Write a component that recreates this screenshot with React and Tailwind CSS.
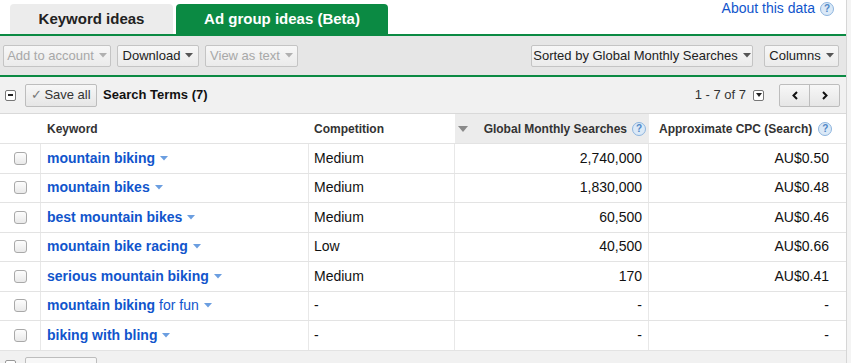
import React from "react";

const Caret = ({ color = "#555" }) => (
  <svg width="8" height="5" viewBox="0 0 8 5" className="inline-block ml-[5px] shrink-0">
    <path d="M0 0 L8 0 L4 4.5 Z" fill={color} />
  </svg>
);

const Help = () => (
  <span className="inline-flex items-center justify-center w-[14px] h-[14px] rounded-full border border-[#8db4de] bg-[#dbe9f7] text-[10px] font-bold text-[#4f86c6] leading-none">?</span>
);

const Btn = ({ children, disabled, className = "" }) => (
  <div
    className={
      "h-[22px] flex items-center justify-center whitespace-nowrap border border-[#c4c4c4] rounded-[2px] bg-gradient-to-b from-[#f7f7f7] to-[#ebebeb] text-[13px] " +
      (disabled ? "text-[#a8a8a8] " : "text-[#222] ") +
      className
    }
  >
    {children}
  </div>
);

const Checkbox = () => (
  <div className="w-[13px] h-[13px] rounded-[3px] border border-[#a9a9a9] bg-gradient-to-b from-[#fdfdfd] to-[#e9e9e9]" />
);

const rows = [
  { k: "mountain biking", c: "Medium", g: "2,740,000", p: "AU$0.50" },
  { k: "mountain bikes", c: "Medium", g: "1,830,000", p: "AU$0.48" },
  { k: "best mountain bikes", c: "Medium", g: "60,500", p: "AU$0.46" },
  { k: "mountain bike racing", c: "Low", g: "40,500", p: "AU$0.66" },
  { k: "serious mountain biking", c: "Medium", g: "170", p: "AU$0.41" },
  { k: "mountain biking", extra: "for fun", c: "-", g: "-", p: "-" },
  { k: "biking with bling", c: "-", g: "-", p: "-" },
];

export default function App() {
  return (
    <div
      className="w-[851px] h-[363px] overflow-hidden bg-white flex"
      style={{ fontFamily: '"Liberation Sans", Arial, sans-serif' }}
    >
      <div className="w-[846px] flex flex-col shrink-0">
        {/* Tabs */}
        <div className="h-[36px] flex items-end relative border-b-2 border-[#0b8a43]">
          <div className="ml-[10px] w-[163px] h-[30px] rounded-t-[4px] bg-[#ececec] flex items-center justify-center text-[15px] font-bold text-[#222]">
            Keyword ideas
          </div>
          <div className="ml-[3px] w-[212px] h-[30px] rounded-t-[4px] bg-[#0b8a43] flex items-center justify-center text-[15px] font-bold text-white">
            Ad group ideas (Beta)
          </div>
          <div className="absolute right-[12px] top-[-2px] flex items-center gap-[5px] text-[14px] text-[#1155cc]">
            About this data <Help />
          </div>
        </div>
        {/* Toolbar */}
        <div className="h-[41px] bg-[#e6e6e6] border-b-2 border-[#0b8a43] flex items-center px-[3px]">
          <Btn disabled className="w-[108px]">Add to account<Caret color="#b0b0b0" /></Btn>
          <Btn className="ml-[6px] w-[82px]">Download<Caret /></Btn>
          <Btn disabled className="ml-[6px] w-[93px]">View as text<Caret color="#b0b0b0" /></Btn>
          <div className="flex-1" />
          <Btn className="w-[222px]">Sorted by Global Monthly Searches<Caret /></Btn>
          <Btn className="ml-[11px] w-[75px] mr-[4px]">Columns<Caret /></Btn>
        </div>
        {/* Sub header */}
        <div className="h-[37px] bg-[#f1f1f1] border-b border-[#d9d9d9] flex items-center">
          <div className="ml-[5px] w-[11px] h-[11px] border border-[#777] rounded-[2px] bg-white flex items-center justify-center">
            <div className="w-[5px] h-[1.5px] bg-[#222]" />
          </div>
          <div className="ml-[9px] h-[23px] w-[72px] border border-[#bdbdbd] rounded-[2px] bg-gradient-to-b from-[#f7f7f7] to-[#e6e6e6] flex items-center justify-center text-[13px] text-[#333]">
            <span className="text-[#777] mr-[2px]">✓</span>Save all
          </div>
          <div className="ml-[6px] text-[13px] font-bold text-[#111]">Search Terms (7)</div>
          <div className="flex-1" />
          <div className="text-[13px] text-[#333]">1 - 7 of 7</div>
          <div className="ml-[7px] w-[11px] h-[11px] border border-[#777] rounded-[2px] bg-white flex items-center justify-center">
            <svg width="6" height="4" viewBox="0 0 6 4"><path d="M0 0 L6 0 L3 4 Z" fill="#222" /></svg>
          </div>
          <div className="ml-[15px] mr-[6px] h-[23px] w-[61px] border border-[#bdbdbd] rounded-[2px] bg-gradient-to-b from-[#f7f7f7] to-[#e6e6e6] flex">
            <div className="flex-1 flex items-center justify-center border-r border-[#bdbdbd]">
              <svg width="6" height="9" viewBox="0 0 6 9"><path d="M5 1 L1.5 4.5 L5 8" stroke="#111" strokeWidth="2" fill="none" /></svg>
            </div>
            <div className="flex-1 flex items-center justify-center">
              <svg width="6" height="9" viewBox="0 0 6 9"><path d="M1 1 L4.5 4.5 L1 8" stroke="#111" strokeWidth="2" fill="none" /></svg>
            </div>
          </div>
        </div>
        {/* Table header */}
        <div className="grid grid-cols-[41px_268px_146px_194px_197px] h-[30px] border-b border-[#e3e3e3] text-[12px] font-bold text-[#333]">
          <div />
          <div className="flex items-center pl-[6px]">Keyword</div>
          <div className="flex items-center pl-[5px]">Competition</div>
          <div className="flex items-center bg-[#ececec] pl-[3px] pr-[3px]">
            <svg width="10" height="6" viewBox="0 0 10 6"><path d="M0 0 L10 0 L5 6 Z" fill="#8a8a8a" /></svg>
            <div className="flex-1" />
            <span className="mr-[5px]">Global Monthly Searches</span>
            <Help />
          </div>
          <div className="flex items-center pl-[10px]">
            <span className="mr-[6px]">Approximate CPC (Search)</span>
            <Help />
          </div>
        </div>
        {/* Rows */}
        {rows.map((r, i) => (
          <div
            key={i}
            className="grid grid-cols-[41px_268px_146px_194px_197px] h-[29.5px] border-b border-[#e3e3e3] text-[14px] text-[#111]"
          >
            <div className="flex items-center justify-center border-r border-[#e8e8e8] pl-[1px]">
              <Checkbox />
            </div>
            <div className="flex items-center pl-[6px] border-r border-[#e8e8e8] text-[#1155cc] font-bold">
              {r.k}
              {r.extra && <span className="font-normal ml-[4px]">{r.extra}</span>}
              <Caret color="#6b9ee0" />
            </div>
            <div className="flex items-center pl-[5px] border-r border-[#e8e8e8]">{r.c}</div>
            <div className="flex items-center justify-end pr-[6px] border-r border-[#e8e8e8]">{r.g}</div>
            <div className="flex items-center justify-end pr-[17px]">{r.p}</div>
          </div>
        ))}
        {/* Footer */}
        <div className="flex-1 bg-[#f1f1f1] relative">
          <div className="absolute left-[5px] top-[9px] w-[11px] h-[11px] border border-[#999] rounded-[2px] bg-white" />
          <div className="absolute left-[25px] top-[6px] w-[72px] h-[23px] border border-[#bdbdbd] rounded-[2px] bg-[#f7f7f7]" />
        </div>
      </div>
      <div className="flex-1 border-l border-[#d6d6d6] bg-[#f4f4f4]" />
    </div>
  );
}
